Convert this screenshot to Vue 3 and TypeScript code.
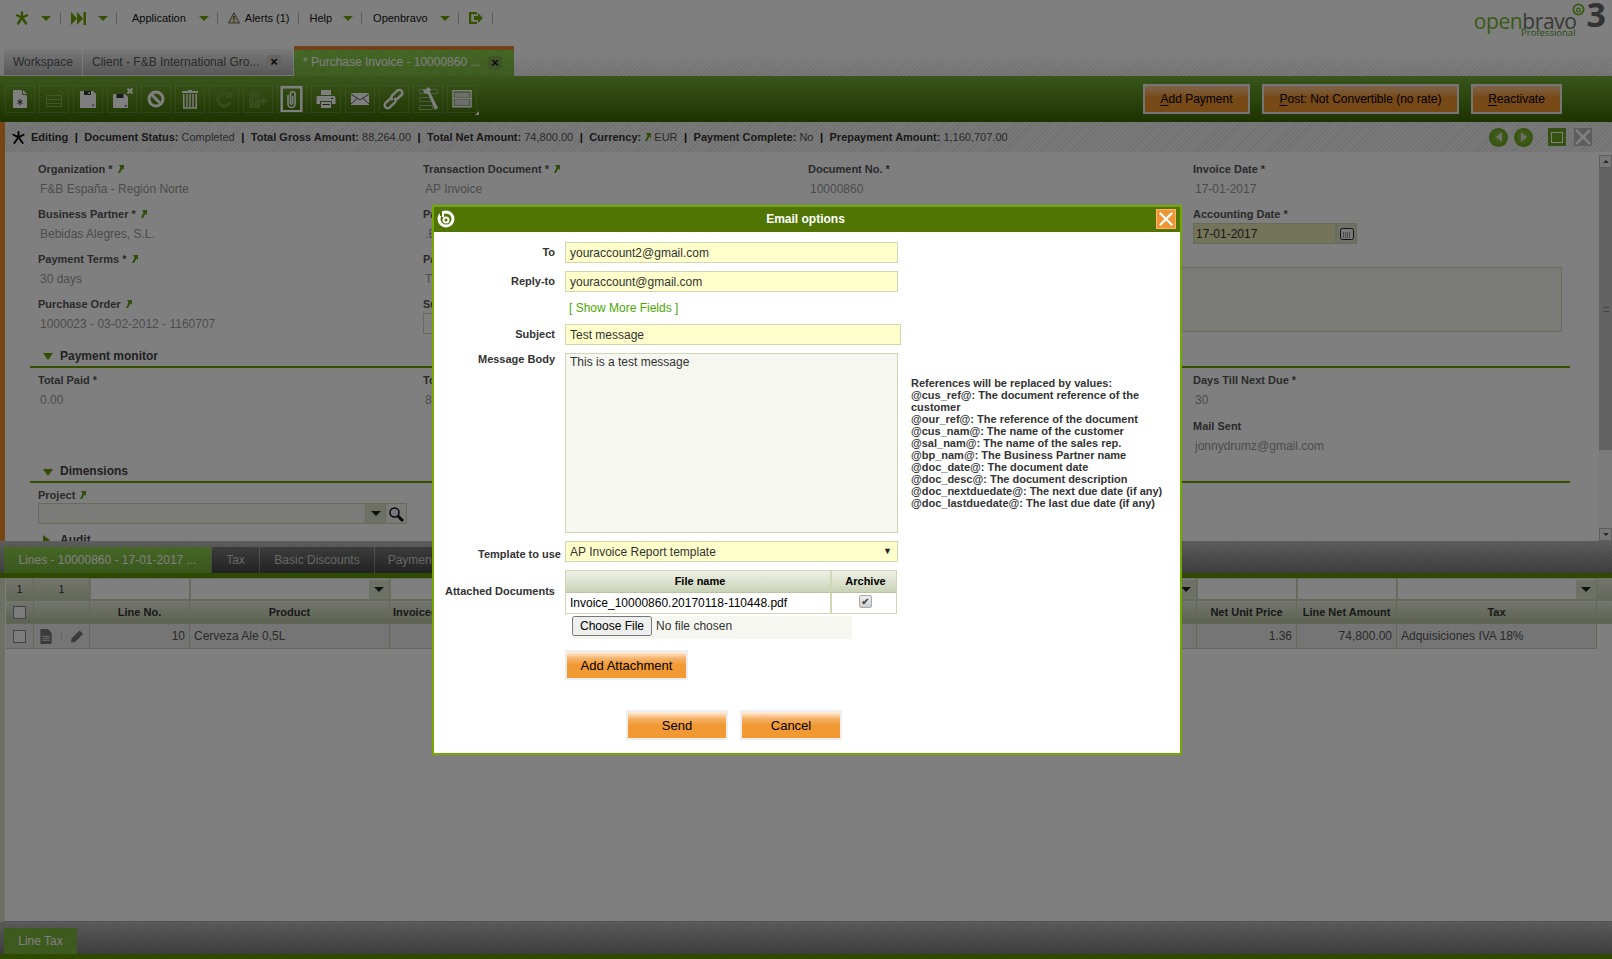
<script setup lang="ts">
interface Field { label: string; value?: string; link?: boolean; kind?: string }

const topFields: Field[] = [
  { label: 'Organization *', value: 'F&B España - Región Norte', link: true },
  { label: 'Transaction Document *', value: 'AP Invoice', link: true },
  { label: 'Document No. *', value: '10000860' },
  { label: 'Invoice Date *', value: '17-01-2017' },
  { label: 'Business Partner *', value: 'Bebidas Alegres, S.L.', link: true },
  { label: 'Partner Address *', value: '.Bebidas Alegres', link: true },
  { label: '', value: '' },
  { label: 'Accounting Date *', kind: 'date' },
  { label: 'Payment Terms *', value: '30 days', link: true },
  { label: 'Payment Method *', value: 'Transfer', link: true },
  { label: 'Purchase Order', value: '1000023 - 03-02-2012 - 1160707', link: true },
  { label: 'Subject', kind: 'box' }
]
const monitorFields: Field[] = [
  { label: 'Total Paid *', value: '0.00' },
  { label: 'Total Outstanding *', value: '88,264.00' },
  { label: '', value: '' },
  { label: 'Days Till Next Due *', value: '30' },
  { label: '', value: '' },
  { label: '', value: '' },
  { label: '', value: '' },
  { label: 'Mail Sent', value: 'jonnydrumz@gmail.com' }
]
const statusItems: [string, string][] = [
  ['Document Status:', 'Completed'],
  ['Total Gross Amount:', '88,264.00'],
  ['Total Net Amount:', '74,800.00'],
  ['Currency:', 'EUR'],
  ['Payment Complete:', 'No'],
  ['Prepayment Amount:', '1,160,707.00']
]
const refs: string[] = [
  'References will be replaced by values:',
  '@cus_ref@: The document reference of the customer',
  '@our_ref@: The reference of the document',
  '@cus_nam@: The name of the customer',
  '@sal_nam@: The name of the sales rep.',
  '@bp_nam@: The Business Partner name',
  '@doc_date@: The document date',
  '@doc_desc@: The document description',
  '@doc_nextduedate@: The next due date (if any)',
  '@doc_lastduedate@: The last due date (if any)'
]
</script>

<template>
  <div class="app">
    <!-- top navigation -->
    <header class="nav">
      <svg class="ni star" viewBox="0 0 14 14"><g stroke="#6aa000" stroke-width="2.4" stroke-linecap="round"><path d="M7 1.5V6M2 4.2 6 6.3M12 4.2 8 6.3M3 12.5 6 8M11 12.5 8 8"/></g></svg>
      <i class="caret m12"></i><i class="sep m9"></i>
      <svg class="ni ff" viewBox="0 0 15 13"><path fill="#6aa000" d="M0 0l6 6.5L0 13zM6 0l6 6.5L6 13zM12.5 0H15v13h-2.500z"/></svg>
      <i class="caret m12"></i><i class="sep m8"></i>
      <span class="nt m15">Application</span><i class="caret m13"></i><i class="sep m8"></i>
      <svg class="ni warn" viewBox="0 0 12 12"><path d="M6 .7 11.500 11H.5z" fill="#f5e9b0" stroke="#666" stroke-width="1"/><path d="M6 4v4M6 9v1" stroke="#333" stroke-width="1.200"/></svg>
      <span class="nt m5">Alerts (1)</span><i class="sep m9"></i>
      <span class="nt m10">Help</span><i class="caret m11"></i><i class="sep m8"></i>
      <span class="nt m11">Openbravo</span><i class="caret m12"></i><i class="sep m8"></i>
      <svg class="ni logout" viewBox="0 0 14 12"><path fill="none" stroke="#6aa000" stroke-width="2.200" d="M8 1.100H1.100v9.800H8"/><path fill="#6aa000" d="M5 4h4V1l5 5-5 5V8H5z"/></svg>
      <i class="sep m9"></i>
      <div class="logo">
        <div class="logo-text">
          <div class="logo-name"><span class="lg">open</span><span class="lb">bravo</span></div>
          <div class="logo-sub">Professional</div>
        </div>
        <svg class="spiral" viewBox="0 0 14 14"><circle cx="7" cy="7" r="5.500" fill="none" stroke="#6fb52c" stroke-width="2"/><circle cx="7" cy="7.500" r="2" fill="none" stroke="#6fb52c" stroke-width="1.500"/></svg>
        <span class="logo-3">3</span>
      </div>
    </header>

    <!-- window tabs -->
    <div class="wintabs">
      <div class="wtab wt1">Workspace</div>
      <div class="wtab wt2">Client - F&amp;B International Gro...<b class="tx">×</b></div>
      <div class="wtab active wt3">* Purchase Invoice - 10000860 ...<b class="tx">×</b></div>
    </div>

    <!-- toolbar -->
    <div class="toolbar">
      <div class="tb"><svg viewBox="0 0 27 26"><path fill="#fff" d="M8 4h7l1 1v4h4l1 1v11a1 1 0 0 1-1 1H8a1 1 0 0 1-1-1V5a1 1 0 0 1 1-1zM17 4l4 4h-4z"/><path stroke="#333" stroke-width="1" d="M14 13v6M11.500 14.500l5 3M16.500 14.500l-5 3"/></svg></div>
      <div class="tb off"><svg viewBox="0 0 27 26"><g fill="none" stroke="#7fb24a" stroke-width="1"><rect x="6.500" y="9.500" width="15" height="4"/><rect x="6.500" y="13.500" width="15" height="4"/><rect x="6.500" y="17.500" width="15" height="3"/><circle cx="20" cy="7" r="2.500" stroke-dasharray="1.500 .8"/></g></svg></div>
      <div class="tb"><svg viewBox="0 0 27 26"><path fill="#fff" d="M7 5h12l3 3v13a1 1 0 0 1-1 1H7a1 1 0 0 1-1-1V6a1 1 0 0 1 1-1z"/><path fill="#333" d="M10 5h7v4h-7zM18.500 18.500h1.500v1.500h-1.500z"/><path fill="#fff" d="M14.500 6h1.500v2h-1.500z"/></svg></div>
      <div class="tb"><svg viewBox="0 0 27 26"><path fill="#fff" d="M6 8h11l3 3v11H6a1 1 0 0 1-1-1V9a1 1 0 0 1 1-1z"/><path fill="#333" d="M8.500 8h7v4h-7zM17 19h1.500v1.500H17z"/><path stroke="#fff" stroke-width="2" d="M19.500 2.500l5 5M24.500 2.500l-5 5"/></svg></div>
      <div class="tb"><svg viewBox="0 0 27 26"><circle cx="14" cy="13" r="7" fill="none" stroke="#fff" stroke-width="3"/><path stroke="#fff" stroke-width="3" d="M9 8l10 10"/></svg></div>
      <div class="tb"><svg viewBox="0 0 27 26"><path fill="#fff" d="M6 5h6V4h4v1h6v2H6z"/><path fill="none" stroke="#fff" stroke-width="1.500" d="M7.800 8v14h12.400V8"/><path stroke="#fff" stroke-width="1.400" d="M11 8v13M14 8v13M17 8v13"/></svg></div>
      <div class="tb off"><svg viewBox="0 0 27 26"><path fill="none" stroke="#6b9c38" stroke-width="3" d="M19 9a6.500 6.500 0 1 0 1.400 7"/><path fill="#6b9c38" d="M22 5v7h-7z"/></svg></div>
      <div class="tb off"><svg viewBox="0 0 27 26"><path fill="#6b9c38" d="M5 4h7l4 4v4H10v5h6v5H5zM11 13h7v-2.500l6 4.500-6 4.500V17h-7z"/></svg></div>
      <div class="tb"><svg viewBox="0 0 27 26"><path fill="none" stroke="#fff" stroke-width="2.500" d="M3.700 1.200h19.600v24H3.700z"/><path fill="none" stroke="#fff" stroke-width="1.600" d="M10 9v9a3.500 3.500 0 0 0 7 0V8a2.300 2.300 0 0 0-4.600 0v9a1.100 1.100 0 0 0 2.200 0V10"/></svg></div>
      <div class="tb"><svg viewBox="0 0 27 26"><path fill="#fff" d="M9 4h10v5H9zM6 10h16a1.500 1.500 0 0 1 1.500 1.500V18H20v-3H8v3H4.500v-6.500A1.500 1.500 0 0 1 6 10z"/><path fill="#fff" d="M9 16h10v6H9z"/><path fill="#333" d="M10.500 18h7v1h-7zM19 12h2v1h-2z"/></svg></div>
      <div class="tb"><svg viewBox="0 0 27 26"><path fill="#fff" d="M5 7h18v12H5z"/><path fill="none" stroke="#555" stroke-width="1" d="M5 8l9 6 9-6M5 18l6.500-6M23 18l-6.500-6"/></svg></div>
      <div class="tb"><svg viewBox="0 0 27 26"><g fill="none" stroke="#fff" stroke-width="2.400" stroke-linecap="round"><path d="M10.500 12.500l-5 4.500a3 3 0 0 0 4.200 4.300l5-4.700a3 3 0 0 0 .3-3.800"/><path d="M16.500 13.500l5-4.500a3 3 0 0 0-4.200-4.300l-5 4.700a3 3 0 0 0-.3 3.800"/></g></svg></div>
      <div class="tb"><svg viewBox="0 0 27 26"><g fill="none" stroke="#9fb78f" stroke-width="1"><path d="M5.500 3.500h18v4h-18zM5.500 11.500h13v4h-13zM5.500 19.500h13v4h-13z"/></g><path fill="#fff" d="M13 1l4 2-1 3 8 16-3 2-7-16-4-1-1-4 3 1z"/></svg></div>
      <div class="tb corner"><svg viewBox="0 0 27 26"><path fill="none" stroke="#fff" stroke-width="1.500" d="M5 4.800h18v16H5zM5 12.500h18"/><path fill="#ddd" d="M6.500 6.500h15v5h-15zM6.500 13.500h15v6h-15z"/></svg></div>
      <div class="actions">
        <div class="btn"><u>A</u>dd Payment</div>
        <div class="btn post"><u>P</u>ost: Not Convertible (no rate)</div>
        <div class="btn react"><u>R</u>eactivate</div>
      </div>
    </div>

    <!-- status bar -->
    <div class="status">
      <svg class="st-star" viewBox="0 0 14 14"><g stroke="#000" stroke-width="2" stroke-linecap="round"><path d="M7 1V6M1.500 4 6 6.300M12.500 4 8 6.300M2.500 13 6 8M11.500 13 8 8"/></g></svg>
      <b class="st-first">Editing</b>
      <template v-for="(s, i) in statusItems" :key="i">
        <b class="pipe">|</b>
        <span class="st-item"><b>{{ s[0] }}</b>&nbsp;<svg v-if="s[0] === 'Currency:'" class="lnk lnk-st" viewBox="0 0 6 8"><path fill="#5f9a1a" d="M1 0h5v5L4.500 3.500 2 8H0l2.500-5.500z"/></svg>{{ s[1] }}</span>
      </template>
      <div class="st-ctrl">
        <span class="round"><i class="tri-l"></i></span>
        <span class="round"><i class="tri-r"></i></span>
        <span class="sq green"><i class="inner"></i></span>
        <span class="sq grey"><svg viewBox="0 0 18 18"><path stroke="#fff" stroke-width="2.500" d="M2 2l14 14M16 2 2 16"/></svg></span>
      </div>
    </div>

    <!-- form -->
    <div class="pane">
      <div class="form">
        <div class="grid4">
          <div v-for="(f, i) in topFields" :key="i" class="field" :class="f.kind ? 'k-' + f.kind : ''">
            <div class="lbl">{{ f.label }} <svg v-if="f.link" class="lnk" viewBox="0 0 6 8"><path fill="#5f9a1a" d="M1 0h5v5L4.500 3.500 2 8H0l2.500-5.500z"/></svg></div>
            <div v-if="f.kind === 'date'" class="date"><div class="date-in">17-01-2017</div><div class="date-btn"><svg viewBox="0 0 14 12"><rect x=".5" y=".5" width="13" height="11" rx="2" fill="#f4f4f4" stroke="#222"/><path stroke="#333" stroke-dasharray="1 1" d="M3 5h8M3 7h8M3 9h8"/></svg></div></div>
            <div v-else-if="f.kind === 'box'" class="smallbox"></div>
            <div v-else class="val">{{ f.value }}</div>
          </div>
          <div class="notes"></div>
        </div>
        <div class="sec sec1"><i class="down"></i>Payment monitor</div>
        <div class="grid4 g2">
          <div v-for="(f, i) in monitorFields" :key="i" class="field">
            <div class="lbl">{{ f.label }}</div>
            <div class="val">{{ f.value }}</div>
          </div>
        </div>
        <div class="sec sec2"><i class="down"></i>Dimensions</div>
        <div class="project">
          <div class="lbl">Project <svg class="lnk" viewBox="0 0 6 8"><path fill="#5f9a1a" d="M1 0h5v5L4.500 3.500 2 8H0l2.500-5.500z"/></svg></div>
          <div class="pick">
            <div class="pick-in"></div>
            <div class="pick-b"><i class="dd"></i></div>
            <div class="pick-s"><svg viewBox="0 0 16 16"><circle cx="6.500" cy="6.500" r="4.500" fill="#eef" stroke="#111" stroke-width="1.500"/><path stroke="#111" stroke-width="3" d="M10 10l5 5"/></svg></div>
          </div>
        </div>
        <div class="audit"><i class="right"></i>Audit</div>
      </div>
      <div class="scroll">
        <div class="sb-btn"><i class="sb-up"></i></div>
        <div class="sb-thumb"><span></span></div>
        <div class="sb-track"></div>
        <div class="sb-btn"><i class="sb-down"></i></div>
      </div>
    </div>

    <!-- lower tabs -->
    <div class="lowertabs">
      <div class="ltab active">Lines - 10000860 - 17-01-2017 ...</div>
      <div class="ltab l2">Tax</div>
      <div class="ltab l3">Basic Discounts</div>
      <div class="ltab l4">Payment Plan</div>
    </div>

    <!-- grid -->
    <div class="gridwrap">
      <div class="table">
        <div class="r filter">
          <div class="c f-c">1</div>
          <div class="c f-c">1</div>
          <div class="c fi"></div>
          <div class="c fi dropc"><i class="fd"><i class="dd"></i></i></div>
          <div class="c fi dropc"><i class="fd"><i class="dd"></i></i></div>
          <div class="c fi"></div>
          <div class="c fi"></div>
          <div class="c fi dropc"><i class="fd"><i class="dd"></i></i></div>
          <div class="c f-end"></div>
        </div>
        <div class="r head">
          <div class="c"><i class="chk"></i></div>
          <div class="c"></div>
          <div class="c">Line No.</div>
          <div class="c">Product</div>
          <div class="c hl">Invoiced Quantity</div>
          <div class="c">Net Unit Price</div>
          <div class="c">Line Net Amount</div>
          <div class="c">Tax</div>
          <div class="c f-end"></div>
        </div>
        <div class="r data">
          <div class="c ctr"><i class="chk"></i></div>
          <div class="c ctr icons">
            <svg viewBox="0 0 14 16" class="ic"><path fill="#777" d="M1 0h8l4 4v12H1z"/><path stroke="#ddd" d="M3 8h8M3 10h8M3 12h8"/></svg>
            <i class="ic-sep"></i>
            <svg viewBox="0 0 16 16" class="ic"><path fill="#777" d="M11 1l4 4-9 9-5 1 1-5z"/></svg>
          </div>
          <div class="c rt">10</div>
          <div class="c lf">Cerveza Ale 0,5L</div>
          <div class="c"></div>
          <div class="c rt">1.36</div>
          <div class="c rt">74,800.00</div>
          <div class="c lf">Adquisiciones IVA 18%</div>
        </div>
      </div>
    </div>

    <!-- bottom tabs -->
    <div class="bottomtabs"><div class="btab">Line Tax</div></div>

    <div class="scrim"></div>

    <!-- dialog -->
    <div class="dialog">
      <div class="dlg-head">
        <svg class="dlg-logo" viewBox="0 0 18 18"><circle cx="9" cy="9" r="7" fill="none" stroke="#fff" stroke-width="3"/><circle cx="9" cy="10" r="2.500" fill="none" stroke="#fff" stroke-width="2"/><path d="M3 1h4v5H3z" fill="#507504"/><path d="M6 1v6" stroke="#fff" stroke-width="2"/></svg>
        <span class="dlg-title">Email options</span>
        <div class="dlg-x"><svg viewBox="0 0 20 20"><path stroke="#fff" stroke-width="2.500" d="M3 3l14 14M17 3 3 17"/></svg></div>
      </div>
      <div class="dlg-body">
        <div class="dlg-form">
          <div class="row r-in"><label>To</label><input class="in" readonly value="youraccount2@gmail.com" /></div>
          <div class="row r-in"><label>Reply-to</label><input class="in" readonly value="youraccount@gmail.com" /></div>
          <div class="row r-more"><label></label><a class="more">[ Show More Fields ]</a></div>
          <div class="row r-in"><label>Subject</label><input class="in wide" readonly value="Test message" /></div>
          <div class="row r-ta"><label>Message Body</label><textarea class="ta" readonly>This is a test message</textarea></div>
          <div class="row r-sel"><label class="tmpl">Template to use</label><div class="sel">AP Invoice Report template<i class="sel-c">▼</i></div></div>
          <div class="row r-att">
            <label class="att">Attached Documents</label>
            <div class="att-t">
              <div class="att-h"><div class="a1">File name</div><div class="a2">Archive</div></div>
              <div class="att-r"><div class="a1 txt">Invoice_10000860.20170118-110448.pdf</div><div class="a2 cb"><span class="cbx">✔</span></div></div>
            </div>
          </div>
          <div class="row r-file"><label></label><input class="file" type="file" /></div>
          <div class="row r-add"><label></label><div class="obtn add">Add Attachment</div></div>
          <div class="foot"><div class="obtn send">Send</div><div class="obtn send">Cancel</div></div>
        </div>
        <div class="refs"><div v-for="r in refs" :key="r">{{ r }}</div></div>
      </div>
    </div>
  </div>
</template>

<style>
html, body { margin: 0; padding: 0; background: #fff; }
</style>

<style scoped>
* { box-sizing: border-box; }
.app { position: relative; width: 1612px; height: 959px; overflow: hidden; background: #fff; font: 12px "Liberation Sans", Arial, sans-serif; color: #333; display: flex; flex-direction: column; }
i { display: block; font-style: normal; }

/* nav */
.nav { height: 46px; display: flex; align-items: center; padding: 0 6px 10px 15px; flex: none; }
.ni { flex: none; }
.star { width: 14px; height: 14px; }
.ff { width: 15px; height: 13px; margin-left: 10px; }
.warn { width: 12px; height: 12px; margin-left: 10px; }
.logout { width: 14px; height: 12px; margin-left: 10px; }
.caret { width: 0; height: 0; border-left: 5px solid transparent; border-right: 5px solid transparent; border-top: 5px solid #6aa000; flex: none; }
.m5 { margin-left: 5px; } .m8 { margin-left: 8px; } .m9 { margin-left: 9px; } .m10 { margin-left: 10px; } .m11 { margin-left: 11px; } .m12 { margin-left: 12px; } .m13 { margin-left: 13px; } .m15 { margin-left: 15px; }
.sep { width: 1px; height: 12px; background: #bbb; flex: none; }
.nt { font-size: 11px; color: #111; flex: none; }
.logo { margin-left: auto; display: flex; align-items: flex-start; height: 40px; padding-top: 3px; }
.logo-text { display: flex; flex-direction: column; align-items: flex-end; margin-top: 14px; }
.logo-name { font: 400 21px/13px "Open Sans", sans-serif; letter-spacing: -.4px; }
.lg { color: #6fb52c; } .lb { color: #6a7464; }
.logo-sub { font: 9.500px/8px "Open Sans", sans-serif; color: #4f9418; margin: 1px 1px 0 0; }
.spiral { width: 13px; height: 13px; margin: 2px 0 0 -5px; }
.logo-3 { font: 700 34px/30px "Open Sans", sans-serif; color: #666; margin: -2px 0 0 2px; }

/* window tabs */
.wintabs { height: 30px; flex: none; display: flex; align-items: flex-end; padding-left: 4px; gap: 1px; background: linear-gradient(#fff 20%, rgba(255,255,255,0) 100%), repeating-linear-gradient(135deg, #dcdcdc 0 1px, #f0f0f0 1px 3px); }
.wtab { height: 27px; display: flex; align-items: center; padding-left: 9px; background: linear-gradient(#f2f2f2, #b0b0b0); color: #555; border-bottom: 1px solid #eee; position: relative; flex: none; }
.wt1 { width: 78px; }
.wt2 { width: 210px; }
.wt3 { width: 220px; }
.wtab.active { height: 30px; border-top: 4px solid #e2822f; border-bottom: 0; padding-bottom: 2px; background: repeating-linear-gradient(135deg, rgba(0,0,0,.05) 0 1px, transparent 1px 3px), linear-gradient(#8dd04c, #7fbb44); color: #fff; }
.tx { position: absolute; right: 12px; top: 50%; margin-top: -7px; width: 14px; height: 14px; background: #c9c9c9; border-radius: 3px; font: 700 13px/13px "Liberation Sans", sans-serif; text-align: center; color: #111; }
.wtab.active .tx { background: #7ba851; top: 6px; margin-top: 0; }

/* toolbar */
.toolbar { height: 46px; flex: none; display: flex; align-items: center; gap: 4px; padding: 0 50px 0 5px; background: linear-gradient(#74ad37, #3a6600); }
.tb { width: 30px; height: 28px; border: 1px solid rgba(255,255,255,.14); flex: none; position: relative; display: flex; justify-content: flex-start; }
.tb svg { display: block; width: 27px; height: 26px; }
.tb.corner::after { content: ""; position: absolute; right: -3px; bottom: -3px; border-left: 4px solid transparent; border-bottom: 4px solid #fff; }
.actions { margin-left: auto; display: flex; gap: 12px; }
.btn { height: 30px; width: 107px; border: 2px solid #ededed; background: linear-gradient(#fbc998 0, #f09330 45%, #ec9129 100%); color: #000; display: flex; align-items: center; justify-content: center; }
.btn.post { width: 197px; }
.btn.react { width: 91px; }
.btn u { text-underline-offset: 2px; }

/* status */
.status { height: 30px; flex: none; display: flex; align-items: center; padding-left: 12px; font-size: 11px; color: #555; background: repeating-linear-gradient(135deg, #e2e2e2 0 1px, #f2f2f2 1px 3px); border-left: 5px solid #ee8a22; }
.status b { color: #333; }
.st-star { width: 13px; height: 13px; margin-left: -5px; }
.st-first { margin-left: 6px; }
.status .pipe { margin: 0 6.500px; color: #111; }
.st-item { display: flex; align-items: center; white-space: pre; }
.lnk { width: 6px; height: 8px; display: inline-block; margin-left: 2px; }
.lnk-st { margin: 0 3px 0 1px; }
.st-ctrl { margin-left: auto; display: flex; align-items: center; padding-right: 20px; }
.round { width: 19px; height: 19px; border-radius: 50%; background: radial-gradient(#8cc63f, #5b9612); display: flex; align-items: center; justify-content: center; margin-right: 6px; flex: none; }
.tri-l { width: 0; height: 0; border: 5px solid transparent; border-right: 6px solid #ddd; border-left: 0; }
.tri-r { width: 0; height: 0; border: 5px solid transparent; border-left: 6px solid #ddd; border-right: 0; }
.sq { width: 18px; height: 18px; flex: none; display: flex; align-items: center; justify-content: center; }
.sq.green { background: #6aa320; margin-left: 9px; }
.inner { width: 12px; height: 11px; border: 1px solid #fff; }
.sq.grey { background: #bbb; margin-left: 8px; }
.sq svg { width: 18px; height: 18px; }

/* pane */
.pane { height: 389px; flex: none; display: flex; border-left: 5px solid #ee8a22; overflow: hidden; background: #fff; }
.form { flex: 1; min-width: 0; padding-top: 10px; overflow: hidden; }
.grid4 { display: grid; grid-template-columns: repeat(4, 385px); grid-auto-rows: 45px; padding-left: 33px; position: relative; }
.g2 { padding-top: 5px; grid-auto-rows: 46px; }
.field { min-width: 0; }
.lbl { font: 700 11px/14px "Liberation Sans", sans-serif; color: #555; height: 14px; }
.val { font-size: 12px; line-height: 14px; margin-top: 6px; padding-left: 2px; color: #999; white-space: nowrap; }
.date { display: flex; margin-top: 2px; }
.date-in { width: 143px; height: 21px; background: #e8e8b4; border: 1px solid #cfd8b4; padding: 3px 2px; line-height: 14px; color: #333; }
.date-btn { width: 21px; height: 21px; background: #dde3cc; border: 1px solid #cfd8b4; display: flex; align-items: center; justify-content: center; }
.date-btn svg { width: 14px; height: 12px; }
.k-box { grid-column: 2; grid-row: 4; }
.field:nth-child(11) { grid-column: 1; grid-row: 4; }
.smallbox { width: 200px; height: 21px; border: 1px solid #cfd8b4; margin-top: 2px; }
.notes { grid-column: 3 / 5; grid-row: 3 / 5; margin-top: 15px; width: 754px; height: 65px; border: 1px solid #cfd8b4; background: #f5f7f0; }
.sec { margin-left: 25px; width: 1540px; font: 700 12px/14px "Liberation Sans", sans-serif; border-bottom: 2px solid #6a9b00; display: flex; align-items: center; color: #444; padding-left: 13px; }
.sec1 { height: 26px; padding-top: 3px; }
.sec2 { height: 18px; padding-bottom: 4px; }
.down { width: 0; height: 0; border-left: 5px solid transparent; border-right: 5px solid transparent; border-top: 7px solid #6a9b00; margin-right: 7px; margin-top: 2px; }
.right { width: 0; height: 0; border-top: 5px solid transparent; border-bottom: 5px solid transparent; border-left: 7px solid #6a9b00; margin-right: 10px; }
.project { padding: 5px 0 0 33px; }
.pick { display: flex; width: 369px; height: 21px; margin-top: 1px; border: 1px solid #cfd8b4; background: #f5f7f0; }
.pick-in { flex: 1; }
.pick-b { width: 20px; background: #dde3cc; border-left: 1px solid #cfd8b4; display: flex; align-items: center; justify-content: center; }
.pick-s { width: 21px; border-left: 1px solid #cfd8b4; display: flex; align-items: center; justify-content: center; }
.pick-s svg { width: 16px; height: 16px; }
.dd { width: 0; height: 0; border-left: 5px solid transparent; border-right: 5px solid transparent; border-top: 5px solid #222; }
.audit { margin: 9px 0 0 38px; font: 700 12px/14px "Liberation Sans", sans-serif; display: flex; align-items: center; color: #444; }

.scroll { width: 13px; margin-top: 3px; flex: none; display: flex; flex-direction: column; background: #f4f4f4; }
.sb-btn { height: 13px; border: 1px solid #bbb; background: #eee; display: flex; align-items: center; justify-content: center; }
.sb-thumb { height: 282px; background: #c6c6c6; display: flex; align-items: center; justify-content: center; }
.sb-thumb span { width: 6px; height: 5px; border-top: 1px solid #888; border-bottom: 1px solid #888; }
.sb-track { flex: 1; }
.sb-up { width: 0; height: 0; border: 3px solid transparent; border-bottom: 3px solid #555; border-top: 0; }
.sb-down { width: 0; height: 0; border: 3px solid transparent; border-top: 3px solid #555; border-bottom: 0; }

/* lower tabs */
.lowertabs { height: 37px; flex: none; display: flex; align-items: flex-start; padding: 6px 0 0 4px; gap: 1px; border-bottom: 5px solid #5b9400; background: repeating-linear-gradient(135deg, rgba(0,0,0,.06) 0 1px, transparent 1px 3px), linear-gradient(#bdbdbd, #7d7d7d); }
.ltab { height: 26px; display: flex; align-items: center; justify-content: center; background: linear-gradient(#7a7a7a, #444); color: #ccc; flex: none; }
.ltab.active { width: 207px; background: repeating-linear-gradient(135deg, rgba(0,0,0,.05) 0 1px, transparent 1px 3px), linear-gradient(#8fd04c, #74b03a); color: #fff; }
.l2 { width: 47px; } .l3 { width: 114px; } .l4 { width: 100px; }

/* grid */
.gridwrap { height: 344px; flex: none; border-left: 5px solid #dbe2c8; border-bottom: 1px solid #aaa; background: #fff; padding-left: 1px; overflow: hidden; }
.r { display: grid; grid-template-columns: 28px 56px 100px 200px 807px 100px 100px 200px 1fr; }
.c { border-right: 1px solid #c9d1b2; border-bottom: 1px solid #c9d1b2; min-width: 0; overflow: hidden; display: flex; align-items: center; justify-content: center; white-space: nowrap; }
.filter { height: 23px; }
.f-c { background: linear-gradient(#e7ebdc, #c8d1b0); color: #333; font-size: 11px; }
.fi { background: #fff; border: 1px solid #d7dcc8; border-bottom: 2px solid #c9d1b2; border-right: 1px solid #c9d1b2; position: relative; }
.f-end { background: linear-gradient(#e7ebdc, #c9d1b2); border-right: 0; }
.dropc { justify-content: flex-end; }
.fd { width: 20px; height: 19px; background: #dde3cc; display: flex; align-items: center; justify-content: center; }
.head { height: 23px; font: 700 11px "Liberation Sans", sans-serif; color: #333; }
.head .c { background: linear-gradient(#e9ecdf, #b9c4a1); }
.hl { justify-content: flex-start !important; padding-left: 3px; }
.data { height: 25px; background: #ebebeb; grid-template-columns: 28px 56px 100px 200px 807px 100px 100px 200px; width: 1591px; }
.chk { width: 13px; height: 13px; background: #f8f8f8; border: 1px solid #888; }
.rt { justify-content: flex-end; padding-right: 4px; color: #555; }
.lf { justify-content: flex-start; padding-left: 4px; color: #555; }
.icons { gap: 8px; }
.ic { width: 14px; height: 15px; }
.ic-sep { width: 1px; height: 10px; background: #ccc; }

/* bottom */
.bottomtabs { flex: 1; display: flex; align-items: flex-start; padding: 6px 0 0 4px; border-bottom: 5px solid #5b9400; background: repeating-linear-gradient(135deg, rgba(0,0,0,.06) 0 1px, transparent 1px 3px), linear-gradient(#b8b8b8, #7d7d7d); }
.btab { width: 73px; height: 26px; background: repeating-linear-gradient(135deg, rgba(0,0,0,.05) 0 1px, transparent 1px 3px), #7fb83f; color: #fff; display: flex; align-items: center; justify-content: center; }

.scrim { position: absolute; inset: 0; background: rgba(0,0,0,.5); }

/* dialog */
.dialog { position: absolute; left: 432px; top: 205px; width: 750px; height: 550px; border: 2px solid #73a800; background: #fff; display: flex; flex-direction: column; }
.dlg-head { height: 25px; flex: none; background: #507504; position: relative; display: flex; align-items: center; justify-content: center; color: #fff; font-weight: 700; padding-bottom: 2px; }
.dlg-title { margin-left: -3px; }
.dlg-logo { position: absolute; left: 3px; top: 3px; width: 18px; height: 18px; }
.dlg-x { position: absolute; right: 4px; top: 2px; width: 20px; height: 20px; background: #ef9432; border: 1px solid #ffb366; }
.dlg-x svg { display: block; width: 18px; height: 18px; }
.dlg-body { flex: 1; display: flex; }
.dlg-form { width: 477px; flex: none; padding-top: 10px; }
.row { display: flex; }
.row label { width: 121px; margin-right: 10px; flex: none; text-align: right; font: 700 11px/14px "Liberation Sans", sans-serif; color: #333; }
.r-in { margin-bottom: 8px; align-items: flex-start; }
.r-in label { padding-top: 3px; }
.in { width: 333px; height: 21px; border: 1px solid #cfd8b4; background: #ffc; padding: 0 4px; font: 12px "Liberation Sans", sans-serif; color: #333; outline: none; }
.in.wide { width: 336px; }
.r-more { height: 32px; align-items: center; }
.r-in:nth-child(2) { margin-bottom: 0; }
.more { color: #4aa800; padding-left: 4px; }
.ta { width: 333px; height: 180px; border: 1px solid #cfd8b4; background: #f5f7f0; padding: 1px 4px; font: 12px "Liberation Sans", sans-serif; color: #333; resize: none; outline: none; display: block; }
.r-ta { margin-bottom: 8px; }
.r-ta label { margin-top: -1px; }
.r-sel { margin-bottom: 8px; }
.sel { width: 333px; height: 21px; border: 1px solid #cfd8b4; background: #ffc; padding: 0 4px; line-height: 20px; color: #333; position: relative; }
.sel-c { position: absolute; right: 5px; top: 1px; font-size: 9px; line-height: 17px; color: #222; }
.tmpl { width: 127px !important; margin-right: 4px !important; padding-top: 6px; white-space: nowrap; }
.r-att { align-items: center; }
.att { white-space: nowrap; margin-top: -2px; }
.att-t { width: 332px; border: 1px solid #cfd8b4; border-top: 0; }
.att-h { height: 23px; display: flex; font: 700 11px/20px "Liberation Sans", sans-serif; color: #000; text-align: center; background: linear-gradient(#eef0e6, #c9d3b6); border-bottom: 1px solid #b9c4a1; border-top: 1px solid #cfd8b4; }
.att-r { height: 20px; display: flex; line-height: 20px; color: #000; }
.a1 { width: 266px; border-right: 2px solid #cfd8b4; flex: none; padding-left: 4px; }
.a2 { flex: 1; text-align: center; padding-left: 3px; }
.cb { display: flex; justify-content: center; padding-top: 2px; }
.cbx { width: 13px; height: 13px; border: 1px solid #aaa; border-radius: 2px; background: linear-gradient(#eee, #ccc); color: #333; font: 10px/11px "DejaVu Sans", sans-serif; text-align: center; display: block; }
.r-file { margin-top: 2px; }
.r-file label { width: 128px; margin-right: 10px; }
.file { width: 280px; height: 23px; background: #f5f7f0; font: 12px "Liberation Sans", sans-serif; color: #333; display: block; }
.r-add { margin-top: 11px; }
.obtn { border: 2px solid #eee; background: linear-gradient(#fff0dd 0, #f6b36b 25%, #f19a33 50%, #f19a33 100%); color: #000; font-size: 13px; display: flex; align-items: center; justify-content: center; height: 30px; width: 102px; }
.add { width: 123px; }
.foot { display: flex; gap: 12px; margin-top: 30px; padding-left: 192px; }
.refs { padding-top: 145px; width: 255px; font: 700 11px/12px "Liberation Sans", sans-serif; color: #333; }
</style>
